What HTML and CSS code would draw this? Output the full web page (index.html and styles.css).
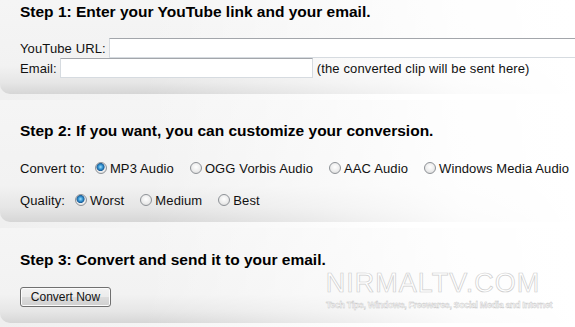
FILE: index.html
```html
<!DOCTYPE html>
<html lang="en">
<head>
    <meta charset="UTF-8">
    <title>YouTube to MP3</title>
    <link rel="stylesheet" href="styles.css">
</head>
<body>
    <div class="page">
        <!-- Step 1 -->
        <div class="step step-one">
            <h2>Step 1: Enter your YouTube link and your email.</h2>
            <div class="field">
                <label for="url">YouTube URL:</label>
                <input type="text" id="url" class="url-input">
            </div>
            <div class="field">
                <label for="email">Email:</label>
                <input type="text" id="email" class="email-input">
                <span class="hint">(the converted clip will be sent here)</span>
            </div>
        </div>

        <!-- Step 2 -->
        <div class="step step-two">
            <h2>Step 2: If you want, you can customize your conversion.</h2>
            <div class="options convert-row">
                <span class="options-label">Convert to:</span>
                <label class="option"><input type="radio" name="format" class="radio" checked>MP3 Audio</label>
                <label class="option"><input type="radio" name="format" class="radio">OGG Vorbis Audio</label>
                <label class="option"><input type="radio" name="format" class="radio">AAC Audio</label>
                <label class="option"><input type="radio" name="format" class="radio">Windows Media Audio</label>
            </div>
            <div class="options quality-row">
                <span class="options-label">Quality:</span>
                <label class="option"><input type="radio" name="quality" class="radio" checked>Worst</label>
                <label class="option"><input type="radio" name="quality" class="radio">Medium</label>
                <label class="option"><input type="radio" name="quality" class="radio">Best</label>
            </div>
        </div>

        <!-- Step 3 -->
        <div class="step step-three">
            <h2>Step 3: Convert and send it to your email.</h2>
            <button class="convert-button">Convert Now</button>

            <div class="watermark">
                <span class="watermark-name">NIRMALTV.COM</span>
                <span class="watermark-tag">Tech Tips, Windows, Freewares, Social Media and Internet</span>
            </div>
        </div>
    </div>
</body>
</html>
```

FILE: styles.css
```css
/* Reset */
* {
    margin: 0;
    padding: 0;
    box-sizing: border-box;
}

body {
    width: 575px;
    height: 327px;
    overflow: hidden;
    font-family: "Liberation Sans", Arial, sans-serif;
    font-size: 13px;
    letter-spacing: 0.12px;
    color: #111;
    background: linear-gradient(to right, #efefef 0%, #f8f8f8 40%, #fff 70%);
}

.page {
    display: flex;
    flex-direction: column;
    gap: 6px;
}

/* Panels */
.step {
    position: relative;
    padding-left: 20px;
    border-bottom-left-radius: 10px;
    background:
        linear-gradient(to right, rgba(255,255,255,0) 25%, rgba(255,255,255,0.9) 80%, #fff 100%),
        linear-gradient(to bottom, #f5f5f5 0%, #f2f2f2 70%, #e6e6e6 88%, #d6d6d6 100%);
}

.step h2 {
    font-size: 15.5px;
    line-height: 18px;
    font-weight: bold;
    letter-spacing: 0;
    color: #000;
}

.step-one {
    padding-top: 3px;
    padding-bottom: 16px;
}

.step-one h2 {
    margin-bottom: 17px;
}

.field {
    display: flex;
    align-items: center;
    gap: 3px;
    height: 20px;
    white-space: nowrap;
}

.field input {
    height: 20px;
    border: 1px solid #d6dbe0;
    border-top-color: #a3a6ab;
    background: #fff;
    outline: none;
    flex-shrink: 0;
}

.url-input {
    width: 480px;
}

.email-input {
    width: 253px;
}

.hint {
    margin-left: 1px;
}

/* Step 2 */
.step-two {
    padding-top: 22px;
    padding-bottom: 12px;
}

.options {
    display: flex;
    align-items: center;
    height: 20px;
    white-space: nowrap;
}

.convert-row {
    margin-top: 18px;
}

.quality-row {
    margin-top: 12px;
}

.options-label {
    margin-right: 10px;
}

.option {
    display: flex;
    align-items: center;
    gap: 3px;
    margin-right: 16px;
}

.radio {
    appearance: none;
    -webkit-appearance: none;
    width: 12px;
    height: 12px;
    margin: 0;
    border-radius: 50%;
    border: 1px solid #8e9297;
    background: radial-gradient(circle at 50% 40%, #fff 0%, #ececec 55%, #d2d2d2 100%);
}

.radio:checked {
    background: radial-gradient(circle at 45% 40%, #a6e0fb 0%, #3a9ad6 25%, #1c5f9a 45%, #eeeeee 55%, #d6d6d6 100%);
}

/* Step 3 */
.step-three {
    padding-top: 23px;
    padding-bottom: 16px;
}

.step-three h2 {
    margin-bottom: 18px;
}

.convert-button {
    width: 91px;
    height: 20px;
    font-family: "Liberation Sans", Arial, sans-serif;
    font-size: 12px;
    color: #111;
    border: 1px solid #707070;
    border-radius: 3px;
    background: linear-gradient(to bottom, #f2f2f2 0%, #ebebeb 50%, #dddddd 51%, #cfcfcf 100%);
    box-shadow: inset 0 0 0 1px #fbfbfb;
}

.watermark {
    position: absolute;
    left: 325px;
    top: 42px;
    width: 228px;
    display: flex;
    flex-direction: column;
    align-items: center;
    pointer-events: none;
}

.watermark-name {
    margin-right: 12px;
    font-size: 27px;
    line-height: 27px;
    letter-spacing: 1px;
    color: #fff;
    -webkit-text-stroke: 0.7px #cfcfcf;
}

.watermark-tag {
    margin-top: 3px;
    font-size: 9px;
    line-height: 11px;
    font-weight: bold;
    color: #fff;
    -webkit-text-stroke: 0.4px #c4c4c4;
    letter-spacing: -0.4px;
}
```
